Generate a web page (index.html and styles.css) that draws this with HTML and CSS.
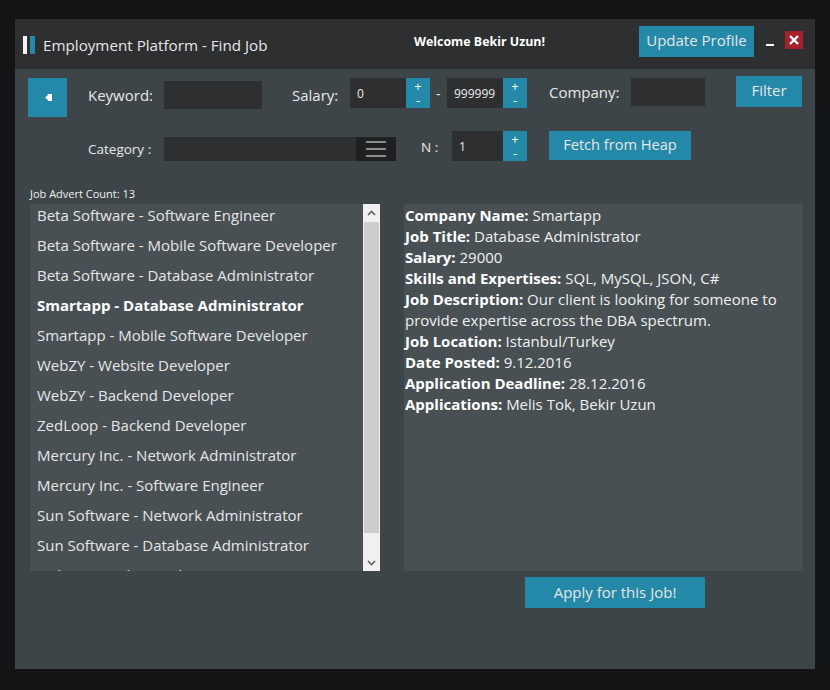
FILE: index.html
```html
<!DOCTYPE html>
<html>
<head>
<meta charset="utf-8">
<link rel="stylesheet" href="styles.css">
</head>
<body>
<div class="window">
  <header class="titlebar">
    <div class="title-left">
      <span class="logo"><i class="bar bar-white"></i><i class="bar bar-blue"></i></span>
      <span class="title">Employment Platform - Find Job</span>
    </div>
    <span class="welcome">Welcome Bekir Uzun!</span>
    <span class="spacer"></span>
    <button class="btn update">Update Profile</button>
    <span class="minimize"></span>
    <span class="close"><svg width="18" height="18" viewBox="0 0 18 18"><path d="M5 5 L13 13 M13 5 L5 13" stroke="#fff" stroke-width="2.4"/></svg></span>
  </header>
  <section class="content">
    <div class="row row1">
      <button class="btn back"><svg width="7" height="7" viewBox="0 0 7 7"><polygon points="0,3.5 2.5,1.5 3,0 7,0 7,7 3,7 2.5,5.5" fill="#fff"/></svg></button>
      <label class="lbl lbl-keyword">Keyword:</label>
      <span class="input in-keyword"></span>
      <label class="lbl lbl-salary">Salary:</label>
      <span class="input in-num">0</span>
      <span class="spin"><span>+</span><span>-</span></span>
      <span class="dash">-</span>
      <span class="input in-num">999999</span>
      <span class="spin"><span>+</span><span>-</span></span>
      <label class="lbl lbl-company">Company:</label>
      <span class="input in-company"></span>
      <button class="btn filter">Filter</button>
    </div>
    <div class="row row2">
      <label class="lbl lbl-category">Category :</label>
      <span class="combo"><span class="combo-btn"><i></i><i></i><i></i></span></span>
      <label class="lbl lbl-n">N :</label>
      <span class="input in-n">1</span>
      <span class="spin"><span>+</span><span>-</span></span>
      <button class="btn fetch">Fetch from Heap</button>
    </div>
    <div class="main">
      <div class="count">Job Advert Count: 13</div>
      <div></div>
      <div class="list">
        <ul class="items">
          <li>Beta Software - Software Engineer</li>
          <li>Beta Software - Mobile Software Developer</li>
          <li>Beta Software - Database Administrator</li>
          <li class="selected">Smartapp - Database Administrator</li>
          <li>Smartapp - Mobile Software Developer</li>
          <li>WebZY - Website Developer</li>
          <li>WebZY - Backend Developer</li>
          <li>ZedLoop - Backend Developer</li>
          <li>Mercury Inc. - Network Administrator</li>
          <li>Mercury Inc. - Software Engineer</li>
          <li>Sun Software - Network Administrator</li>
          <li>Sun Software - Database Administrator</li>
          <li>Nokya - Database Administrator</li>
        </ul>
        <div class="scrollbar">
          <span class="arrow up"><svg width="9" height="6" viewBox="0 0 9 6"><path d="M1 5 L4.5 1.5 L8 5" stroke="#606060" stroke-width="1.6" fill="none"/></svg></span>
          <span class="thumb"></span>
          <span class="arrow down"><svg width="9" height="6" viewBox="0 0 9 6"><path d="M1 1 L4.5 4.5 L8 1" stroke="#606060" stroke-width="1.6" fill="none"/></svg></span>
        </div>
      </div>
      <div class="details">
        <p><b>Company Name:</b> Smartapp</p>
        <p><b>Job Title:</b> Database Administrator</p>
        <p><b>Salary:</b> 29000</p>
        <p><b>Skills and Expertises:</b> SQL, MySQL, JSON, C#</p>
        <p><b>Job Description:</b> Our client is looking for someone to<br>provide expertise across the DBA spectrum.</p>
        <p><b>Job Location:</b> Istanbul/Turkey</p>
        <p><b>Date Posted:</b> 9.12.2016</p>
        <p><b>Application Deadline:</b> 28.12.2016</p>
        <p><b>Applications:</b> Melis Tok, Bekir Uzun</p>
      </div>
      <div></div>
      <div class="apply-wrap"><button class="btn apply">Apply for this Job!</button></div>
    </div>
  </section>
</div>
</body>
</html>
```
FILE: styles.css
```css
* { box-sizing: border-box; }
html, body { margin: 0; padding: 0; }
body {
  width: 830px;
  height: 690px;
  overflow: hidden;
  background: #131415;
  font-family: "Open Sans", "Noto Sans", sans-serif;
  color: #e8e8e8;
}
.window {
  margin: 19px 0 0 15px;
  width: 800px;
  height: 650px;
  display: flex;
  flex-direction: column;
}
.titlebar {
  height: 50px;
  background: #2d2f31;
  display: flex;
  align-items: flex-start;
  padding-right: 12px;
}
.title-left {
  width: 399px;
  height: 50px;
  padding-left: 8px;
  display: flex;
  align-items: center;
}
.logo { display: flex; gap: 3px; margin-top: 1px; }
.bar { display: block; height: 18px; }
.bar-white { width: 4px; background: #f2f2f2; }
.bar-blue { width: 5px; background: #2489a8; }
.title {
  margin-left: 8px;
  font-size: 15.2px;
  color: #e6e6e6;
  margin-top: 2px;
}
.welcome {
  font-size: 12.4px;
  font-weight: 700;
  color: #fff;
  margin-top: 15px;
  line-height: 16px;
}
.spacer { flex: 1; }
.btn {
  border: 0;
  background: #2489a8;
  color: #e6e6e6;
  font-family: inherit;
  padding: 0;
  display: flex;
  align-items: center;
  justify-content: center;
}
.update {
  width: 115px;
  height: 31px;
  margin-top: 7px;
  font-size: 15px;
  padding-bottom: 4px;
}
.minimize {
  width: 8px;
  height: 2px;
  background: #fff;
  margin: 25px 0 0 12px;
}
.close {
  width: 18px;
  height: 18px;
  background: #a5222a;
  margin: 12px 0 0 11px;
  display: flex;
}
.content {
  flex: 1;
  background: #3d4548;
}
.row { display: flex; align-items: flex-start; }
.row1 { height: 58px; padding-left: 13px; }
.back { width: 39px; height: 39px; margin-top: 9px; padding-left: 2px; }
.lbl { font-size: 15px; line-height: 20px; color: #e8e8e8; }
.lbl-keyword { width: 76px; margin: 16px 0 0 21px; }
.in-keyword { width: 98px; height: 28px; margin-top: 12px; }
.lbl-salary { width: 58px; margin: 16px 0 0 30px; }
.input {
  background: #2d2f30;
  color: #eaeaea;
  font-size: 12px;
  display: flex;
  align-items: center;
  padding-left: 7px;
}
.in-num { width: 56px; height: 30px; margin-top: 9px; }
.spin {
  width: 24px;
  height: 30px;
  margin-top: 9px;
  background: #2489a8;
  color: #fff;
  font-size: 13px;
  line-height: 13px;
  display: flex;
  flex-direction: column;
  align-items: center;
  justify-content: center;
  gap: 1px;
}
.dash { width: 17px; padding-left: 6px; font-size: 14px; margin-top: 15px; }
.lbl-company { width: 82px; margin: 13px 0 0 22px; }
.in-company { width: 74px; height: 28px; margin-top: 9px; }
.filter { width: 66px; height: 31px; margin: 7px 0 0 31px; font-size: 15px; padding-bottom: 3px; }
.row2 { height: 57px; padding-left: 73px; }
.lbl-category { width: 76px; font-size: 13.5px; margin-top: 12px; }
.combo {
  width: 232px;
  height: 24px;
  margin-top: 10px;
  background: #2d2f30;
  display: flex;
  justify-content: flex-end;
}
.combo-btn {
  width: 40px;
  height: 24px;
  background: #1f2021;
  display: flex;
  flex-direction: column;
  align-items: center;
  justify-content: center;
  gap: 5px;
}
.combo-btn i { display: block; width: 20px; height: 2px; background: #8c8c8c; }
.lbl-n { width: 31px; margin: 10px 0 0 25px; font-size: 13.5px; }
.in-n { width: 51px; height: 30px; margin-top: 4px; }
.row2 .spin { margin-top: 4px; }
.fetch { width: 142px; height: 29px; margin: 4px 0 0 22px; font-size: 14.6px; padding-bottom: 3px; }
.main {
  display: grid;
  grid-template-columns: 350px 399px;
  grid-template-rows: 20px 367px auto;
  column-gap: 24px;
  padding-left: 15px;
}
.count {
  font-size: 11px;
  line-height: 20px;
  color: #f0f0f0;
}
.list {
  display: flex;
  background: #485054;
  overflow: hidden;
}
.items {
  flex: 1;
  list-style: none;
  margin: -4px 0 0 0;
  padding: 0;
}
.items li {
  height: 30px;
  line-height: 30px;
  padding-left: 7px;
  font-size: 15px;
  color: #e6e6e6;
  white-space: nowrap;
}
.items li.selected { font-weight: 700; color: #fff; }
.scrollbar {
  width: 17px;
  background: #f0f0f0;
  display: flex;
  flex-direction: column;
}
.arrow { height: 17px; display: flex; align-items: center; justify-content: center; }
.thumb { flex: 1; margin: 1px 1px 21px 1px; background: #cdcdcd; }
.details {
  background: #485054;
  padding: 1px 0 0 1px;
  font-size: 15px;
  line-height: 21px;
  color: #f0f0f0;
}
.details p { margin: 0; }
.details b { font-weight: 700; color: #fff; }
.apply-wrap { padding: 6px 0 0 121px; }
.apply { width: 180px; height: 31px; font-size: 15px; padding-bottom: 2px; }
```
